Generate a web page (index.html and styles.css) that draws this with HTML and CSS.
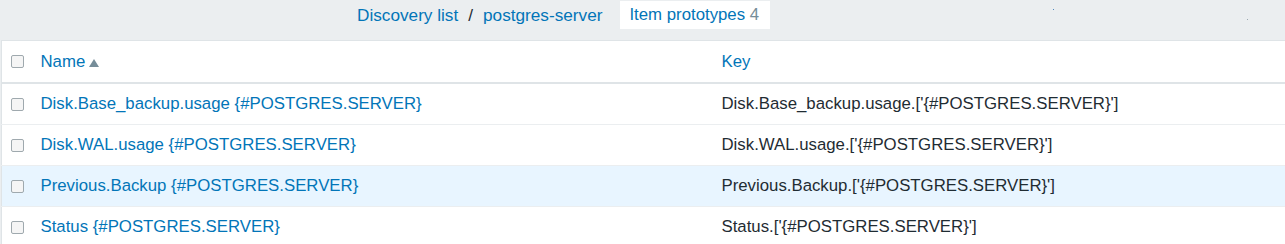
FILE: index.html
```html
<!DOCTYPE html>
<html lang="en">
<head>
    <meta charset="UTF-8">
    <title>Item prototypes</title>
    <link rel="stylesheet" href="styles.css">
</head>
<body>
    <div class="topbar">
        <ul class="breadcrumbs">
            <li><a href="#">Discovery list</a></li>
            <li class="sep">/</li>
            <li><a href="#">postgres-server</a></li>
            <li class="selected"><a href="#">Item prototypes</a> <span class="count">4</span></li>
        </ul>
        <span class="dot dot-a"></span>
        <span class="dot dot-b"></span>
    </div>

    <div class="list-wrap">
        <table class="list-table">
            <colgroup>
                <col class="col-check">
                <col class="col-name">
                <col>
            </colgroup>
            <thead>
                <tr>
                    <th><input type="checkbox" class="checkbox"></th>
                    <th><a href="#">Name</a><span class="arrow-up"></span></th>
                    <th><a href="#">Key</a></th>
                </tr>
            </thead>
            <tbody>
                <tr>
                    <td><input type="checkbox" class="checkbox"></td>
                    <td><a href="#">Disk.Base_backup.usage {#POSTGRES.SERVER}</a></td>
                    <td>Disk.Base_backup.usage.['{#POSTGRES.SERVER}']</td>
                </tr>
                <tr>
                    <td><input type="checkbox" class="checkbox"></td>
                    <td><a href="#">Disk.WAL.usage {#POSTGRES.SERVER}</a></td>
                    <td>Disk.WAL.usage.['{#POSTGRES.SERVER}']</td>
                </tr>
                <tr class="row-hover">
                    <td><input type="checkbox" class="checkbox"></td>
                    <td><a href="#">Previous.Backup {#POSTGRES.SERVER}</a></td>
                    <td>Previous.Backup.['{#POSTGRES.SERVER}']</td>
                </tr>
                <tr>
                    <td><input type="checkbox" class="checkbox"></td>
                    <td><a href="#">Status {#POSTGRES.SERVER}</a></td>
                    <td>Status.['{#POSTGRES.SERVER}']</td>
                </tr>
            </tbody>
        </table>
    </div>
</body>
</html>
```

FILE: styles.css
```css
body {
    margin: 0;
    font-family: "Liberation Sans", Arial, sans-serif;
    font-size: 16.8px;
    color: #1f2c33;
    background-color: #fff;
}
a {
    color: #0275b8;
    text-decoration: none;
}
.topbar {
    position: relative;
    height: 40px;
    background-color: #ebeef0;
}
.breadcrumbs {
    display: flex;
    align-items: center;
    list-style: none;
    margin: 0 0 0 357px;
    padding: 1px 0 0 0;
    height: 28px;
    font-size: 17.2px;
}
.breadcrumbs li {
    line-height: 28px;
}
.breadcrumbs .sep {
    padding: 0 10px 0 10px;
    color: #1f2c33;
}
.breadcrumbs .selected {
    margin-left: 18px;
    padding: 0 11px 0 9px;
    font-size: 16.8px;
    background-color: #fff;
}
.count {
    color: #768d99;
}
.dot {
    position: absolute;
    width: 1px;
    height: 1px;
}
.dot-a {
    left: 1053px;
    top: 9px;
    background-color: #4a86bf;
}
.dot-b {
    left: 1247px;
    top: 19px;
    background-color: #9aa8b0;
}
.list-wrap {
    background-color: #ebeef0;
    padding-left: 1px;
}
.list-table {
    width: 100%;
    table-layout: fixed;
    border-collapse: collapse;
    background-color: #fff;
    border-top: 1px solid #dfe4e7;
    border-left: 1px solid #dfe4e7;
}
.col-check {
    width: 39px;
}
.col-name {
    width: 681px;
}
.list-table th,
.list-table td {
    padding: 0;
    text-align: left;
    font-weight: normal;
    white-space: nowrap;
    vertical-align: middle;
}
.list-table th {
    height: 41px;
    border-bottom: 2px solid #dfe4e7;
}
.list-table td {
    height: 40px;
    border-bottom: 1px solid #ebeef0;
}
.list-table th:first-child,
.list-table td:first-child {
    padding-left: 9px;
}
.row-hover td {
    background-color: #e8f5ff;
}
.checkbox {
    appearance: none;
    -webkit-appearance: none;
    display: block;
    width: 13px;
    height: 13px;
    margin: 0;
    border: 1px solid #9fa9ae;
    border-radius: 2px;
    background-color: #f5f5f5;
}
.arrow-up {
    display: inline-block;
    margin-left: 4px;
    width: 0;
    height: 0;
    border-left: 5px solid transparent;
    border-right: 5px solid transparent;
    border-bottom: 8px solid #768d99;
    vertical-align: 0;
}
```
